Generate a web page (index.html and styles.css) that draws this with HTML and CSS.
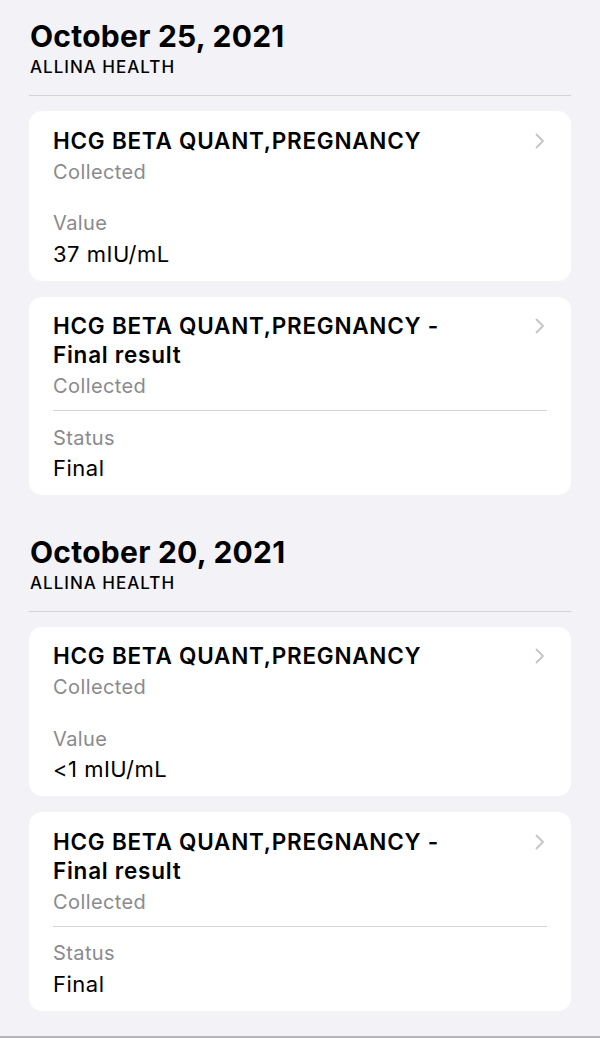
FILE: index.html
```html
<!DOCTYPE html>
<html lang="en">
<head>
<meta charset="utf-8">
<title>Lab Results</title>
<link rel="stylesheet" href="styles.css">
</head>
<body>
<div class="page">
  <section class="day">
    <header class="day-head">
      <h2 class="date">October 25, 2021</h2>
      <div class="source">ALLINA HEALTH</div>
    </header>
    <div class="cards">
      <article class="card">
        <div class="summary">
          <div class="summary-text">
            <div class="title">HCG BETA QUANT,PREGNANCY</div>
            <div class="sub">Collected</div>
          </div>
          <svg class="chev" viewBox="0 0 10 16" width="10" height="16"><path d="M1.5 1.5 L8 8 L1.5 14.5" fill="none" stroke="#c4c4c7" stroke-width="1.8" stroke-linecap="round" stroke-linejoin="round"/></svg>
        </div>
        <div class="detail plain">
          <div class="label">Value</div>
          <div class="value">37 mIU/mL</div>
        </div>
      </article>
      <article class="card">
        <div class="summary">
          <div class="summary-text">
            <div class="title">HCG BETA QUANT,PREGNANCY - Final result</div>
            <div class="sub">Collected</div>
          </div>
          <svg class="chev" viewBox="0 0 10 16" width="10" height="16"><path d="M1.5 1.5 L8 8 L1.5 14.5" fill="none" stroke="#c4c4c7" stroke-width="1.8" stroke-linecap="round" stroke-linejoin="round"/></svg>
        </div>
        <div class="detail">
          <div class="label">Status</div>
          <div class="value">Final</div>
        </div>
      </article>
    </div>
  </section>

  <section class="day">
    <header class="day-head">
      <h2 class="date">October 20, 2021</h2>
      <div class="source">ALLINA HEALTH</div>
    </header>
    <div class="cards">
      <article class="card">
        <div class="summary">
          <div class="summary-text">
            <div class="title">HCG BETA QUANT,PREGNANCY</div>
            <div class="sub">Collected</div>
          </div>
          <svg class="chev" viewBox="0 0 10 16" width="10" height="16"><path d="M1.5 1.5 L8 8 L1.5 14.5" fill="none" stroke="#c4c4c7" stroke-width="1.8" stroke-linecap="round" stroke-linejoin="round"/></svg>
        </div>
        <div class="detail plain">
          <div class="label">Value</div>
          <div class="value">&lt;1 mIU/mL</div>
        </div>
      </article>
      <article class="card">
        <div class="summary">
          <div class="summary-text">
            <div class="title">HCG BETA QUANT,PREGNANCY - Final result</div>
            <div class="sub">Collected</div>
          </div>
          <svg class="chev" viewBox="0 0 10 16" width="10" height="16"><path d="M1.5 1.5 L8 8 L1.5 14.5" fill="none" stroke="#c4c4c7" stroke-width="1.8" stroke-linecap="round" stroke-linejoin="round"/></svg>
        </div>
        <div class="detail">
          <div class="label">Status</div>
          <div class="value">Final</div>
        </div>
      </article>
    </div>
  </section>
</div>
</body>
</html>
```
FILE: styles.css
```css
* { box-sizing: border-box; }
html, body {
  margin: 0;
  padding: 0;
  background: #f2f2f7;
}
body {
  font-family: Inter, "Noto Sans", "Liberation Sans", sans-serif;
  color: #000;
}
.page {
  min-height: 1038px;
  border-bottom: 2px solid #b6b6ba;
  padding: 18px 29px 0;
  display: flex;
  flex-direction: column;
  gap: 38.5px;
}
.day-head {
  padding: 0 1px 18px;
  border-bottom: 1px solid #d3d3d7;
  margin-bottom: 15px;
}
.date {
  margin: 0;
  font-size: 30px;
  line-height: 36px;
  font-weight: 700;
  letter-spacing: 0.25px;
}
.source {
  margin-top: 3px;
  font-size: 17px;
  line-height: 20px;
  font-weight: 500;
  letter-spacing: 1px;
}
.cards {
  display: flex;
  flex-direction: column;
  gap: 16px;
}
.card {
  background: #fff;
  border-radius: 13px;
  padding: 14.5px 24px 13px;
}
.summary {
  display: flex;
  align-items: flex-start;
  gap: 16px;
  padding-bottom: 11px;
}
.summary-text { flex: 1; }
.title {
  font-size: 22.5px;
  line-height: 29px;
  font-weight: 600;
  letter-spacing: 0.75px;
  padding-right: 30px;
}
.sub, .label {
  font-size: 20px;
  line-height: 26px;
  color: #8a8a8e;
  letter-spacing: 0.4px;
}
.sub { margin-top: 4px; }
.chev {
  flex: none;
  margin-top: 7px;
  margin-right: 2px;
}
.detail {
  border-top: 1px solid #d6d6da;
  padding-top: 13.5px;
}
.detail.plain { border-top-color: transparent; }
.value {
  margin-top: 3.5px;
  font-size: 22px;
  line-height: 28px;
  letter-spacing: 0.5px;
}
```
